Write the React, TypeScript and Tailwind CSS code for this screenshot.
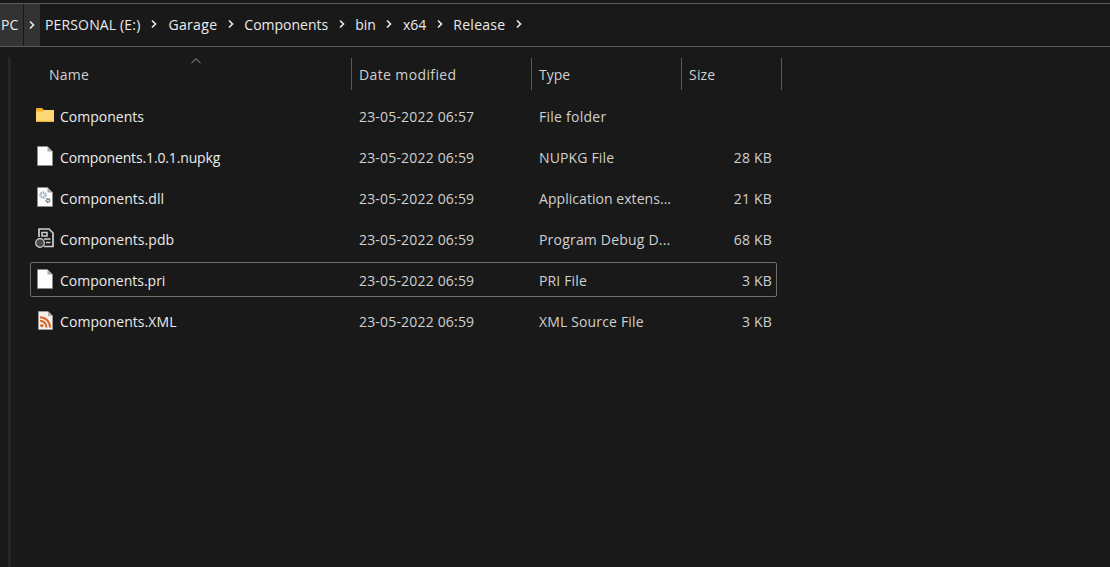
const font = { fontFamily: '"Open Sans", "Noto Sans", sans-serif' };

function Chevron() {
  return (
    <svg width="8" height="10" viewBox="0 0 8 10" className="shrink-0" fill="none">
      <path d="M2 1.5 L5.5 5 L2 8.5" stroke="#ececec" strokeWidth="1.6" />
    </svg>
  );
}

function FolderIcon() {
  return (
    <svg width="18" height="14" viewBox="0 0 18 14">
      <path d="M0 1 a1 1 0 0 1 1-1 h5 l2 2 h9 a1 1 0 0 1 1 1 v1 H0z" fill="#efb02f" />
      <path d="M0 3.5 h7 l1.5-1.5 h8.5 a1 1 0 0 1 1 1 v10 a1 1 0 0 1-1 1 H0z" fill="#fdd874" />
      <rect x="0" y="12.8" width="18" height="1.2" fill="#eeb03c" />
    </svg>
  );
}

function Sheet({ children }: { children?: React.ReactNode }) {
  return (
    <svg width="16" height="20" viewBox="0 0 16 20">
      <path d="M.5 .5 H10.5 L15.5 5.5 V19.5 H.5z" fill="#fdfdfd" stroke="#8a8a8a" />
      <path d="M10.5 .5 V5.5 H15.5z" fill="#a8a8a8" />
      {children}
    </svg>
  );
}

function DllIcon() {
  return (
    <Sheet>
      <circle cx="6" cy="8" r="2.6" fill="#eef1f4" stroke="#a3adb8" strokeWidth="2.2" strokeDasharray="1.6 .7" />
      <circle cx="11" cy="13.5" r="1.6" fill="#ffffff" stroke="#59636e" strokeWidth="1.8" strokeDasharray="1.2 .6" />
    </Sheet>
  );
}

function PdbIcon() {
  return (
    <svg width="20" height="20" viewBox="0 0 20 20" fill="none">
      <path d="M4 9 V1 H14 L18 5 V18.5 H9" stroke="#cfcfcf" strokeWidth="1.7" />
      <path d="M7 4.5 H12 V8 H7z" stroke="#cfcfcf" strokeWidth="1.5" />
      <path d="M9 11 H15.5 M11 14.5 H15.5" stroke="#cfcfcf" strokeWidth="1.7" />
      <circle cx="5" cy="15" r="4.3" fill="#4a4a4a" stroke="#d4d4d4" strokeWidth="1.2" />
    </svg>
  );
}

function XmlIcon() {
  return (
    <svg width="15" height="19" viewBox="0 0 15 19">
      <path d="M.5 .5 H10 L14.5 5 V18.5 H.5z" fill="#f5efe9" stroke="#9a9a9a" />
      <path d="M10 .5 V5 H14.5z" fill="#b0b0b0" />
      <circle cx="3.8" cy="14.6" r="1.7" fill="#d9682a" />
      <path d="M2 9.8 a6.5 6.5 0 0 1 6.5 6.6 M2 6.2 a10 10 0 0 1 10 10.2" stroke="#d9682a" strokeWidth="2.1" fill="none" />
    </svg>
  );
}

const rows = [
  { icon: <FolderIcon />, name: 'Components', nt: 'tracking-[0px]', tt: 'tracking-[0.25px]', date: '23-05-2022 06:57', type: 'File folder', size: '' },
  { icon: <Sheet />, name: 'Components.1.0.1.nupkg', nt: 'tracking-[-0.14px]', tt: 'tracking-[0.15px]', date: '23-05-2022 06:59', type: 'NUPKG File', size: '28 KB' },
  { icon: <DllIcon />, name: 'Components.dll', nt: 'tracking-[0.07px]', tt: 'tracking-[0.05px]', date: '23-05-2022 06:59', type: 'Application extens...', size: '21 KB' },
  { icon: <PdbIcon />, name: 'Components.pdb', nt: 'tracking-[0.07px]', tt: 'tracking-[0.2px]', date: '23-05-2022 06:59', type: 'Program Debug D...', size: '68 KB' },
  { icon: <Sheet />, name: 'Components.pri', nt: 'tracking-[0px]', tt: 'tracking-[0.15px]', date: '23-05-2022 06:59', type: 'PRI File', size: '3 KB', focus: true },
  { icon: <XmlIcon />, name: 'Components.XML', nt: 'tracking-[0.07px]', tt: 'tracking-[0.15px]', date: '23-05-2022 06:59', type: 'XML Source File', size: '3 KB' },
];

const crumbs = [
  { t: 'Garage', c: 'tracking-[0.33px]' },
  { t: 'Components', c: 'tracking-[0px]' },
  { t: 'bin', c: 'tracking-[0px]' },
  { t: 'x64', c: 'tracking-[0px]' },
  { t: 'Release', c: 'tracking-[0.28px]' },
];

export default function App() {
  return (
    <div className="h-[567px] w-[1110px] overflow-hidden bg-[#191919] text-[14px] text-[#ebebeb]" style={font}>
      {/* address bar */}
      <div className="mt-[3px] flex h-[44px] items-center border-y border-[#5a5a5a] bg-[#191919]">
        <div className="flex h-full w-[23px] items-center bg-[#333333] pb-[2px] pl-[1px] pr-[3px]">PC</div>
        <div className="flex h-full w-[17px] items-center justify-center border-l border-[#191919] bg-[#333333]">
          <Chevron />
        </div>
        <div className="flex items-center pb-[2px]">
          <span className="ml-[5px] tracking-[0.15px]">PERSONAL (E:)</span>
          <div className="flex w-[28px] justify-center"><Chevron /></div>
          {crumbs.map((c) => (
            <div key={c.t} className="flex items-center">
              <span className={c.c}>{c.t}</span>
              <div className="flex w-[27px] justify-center"><Chevron /></div>
            </div>
          ))}
        </div>
      </div>

      <div className="flex">
        {/* faint pane edge */}
        <div className="ml-[8px] mt-[10px] h-[520px] w-[3px] bg-[#262626]" />

        <div className="ml-[19px] flex-1">
          {/* header */}
          <div className="relative mt-[11px] flex h-[32px] text-[#d0d0d0]">
            <div className="w-[321px] pl-[19px] leading-[33px] tracking-[0.2px]">Name</div>
            <div className="w-[180px] border-l border-[#5a5a5a] pl-[7px] leading-[33px] tracking-[0.38px]">Date modified</div>
            <div className="w-[150px] border-l border-[#5a5a5a] pl-[7px] leading-[33px]">Type</div>
            <div className="w-[101px] border-l border-r border-[#5a5a5a] pl-[7px] leading-[33px] tracking-[0.2px]">Size</div>
            <svg className="absolute left-[161px] top-0" width="10" height="6" viewBox="0 0 10 6" fill="none">
              <path d="M.5 5 L5 .8 L9.5 5" stroke="#9a9a9a" />
            </svg>
          </div>

          {/* rows */}
          <div className="mt-[8px] flex w-[747px] flex-col gap-[6px]">
            {rows.map((r) => (
              <div
                key={r.name}
                className={`flex h-[35px] items-center rounded-[2px] border pt-[2px] ${r.focus ? 'border-[#6e6e6e]' : 'border-transparent'}`}
              >
                <div className="mb-[3px] flex w-[28px] shrink-0 justify-center">{r.icon}</div>
                <div className={`w-[300px] shrink-0 truncate pl-[1px] ${r.nt}`}>{r.name}</div>
                <div className="w-[180px] shrink-0 tracking-[0.18px] text-[#d0d0d0]">{r.date}</div>
                <div className={`w-[150px] shrink-0 text-[#d0d0d0] ${r.tt}`}>{r.type}</div>
                <div className="w-[83px] shrink-0 text-right tracking-[0.2px] text-[#d0d0d0]">{r.size}</div>
              </div>
            ))}
          </div>
        </div>
      </div>
    </div>
  );
}
